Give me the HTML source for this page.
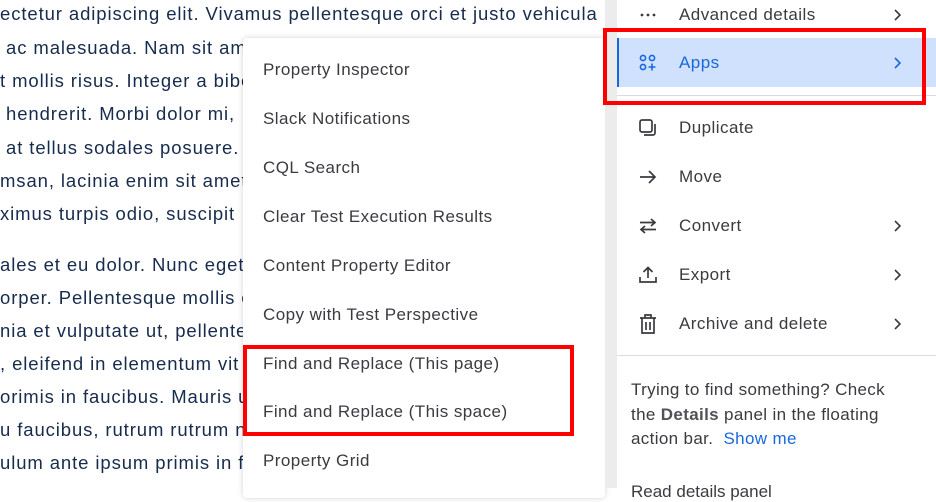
<!DOCTYPE html>
<html><head><meta charset="utf-8"><style>
*{margin:0;padding:0;box-sizing:border-box}
body{width:936px;height:488px;overflow:hidden;background:#fff;font-family:"Liberation Sans",sans-serif;position:relative;color:#292a2e}
.bg{position:absolute;left:0;top:0;font-size:18.5px;letter-spacing:0.9px;color:#172b4d;white-space:nowrap}
.bg div{position:absolute;left:0;height:33px;line-height:33px}
.mid{position:absolute;left:243px;top:38px;width:362px;height:460px;background:#fff;border-radius:4px;box-shadow:0 0 6px rgba(0,0,0,.18)}
.mid div{position:absolute;left:20px;font-size:17px;letter-spacing:0.45px;color:#3a3b40;line-height:20px;white-space:nowrap}
.strip{position:absolute;left:605px;top:0;width:12px;height:488px;background:#ececed}
.right{position:absolute;left:617px;top:0;width:319px;height:488px;background:#fff}
.it{position:absolute;left:0;width:319px;height:49px;font-size:17px;letter-spacing:0.45px;color:#3a3b40}
.it .t{position:absolute;left:62px;top:50%;transform:translateY(-50%)}
.it svg.ic{position:absolute;left:22px;top:50%;transform:translateY(-50%)}
.it .ch{position:absolute;left:276px;top:50%;transform:translateY(-50%)}
.sep{position:absolute;left:0;width:319px;height:1px;background:#dcdde0}
.red{position:absolute;border:4px solid #f00}
.note{position:absolute;left:14px;top:378px;font-size:17px;letter-spacing:0.35px;line-height:24.5px;color:#3a3b40;width:272px}
</style></head><body>
<div class="bg">
<div style="top:-3px">ectetur adipiscing elit. Vivamus pellentesque orci et justo vehicula</div>
<div style="top:31px">&nbsp;ac malesuada. Nam sit am</div>
<div style="top:64px">t mollis risus. Integer a bibe</div>
<div style="top:97px">&nbsp;hendrerit. Morbi dolor mi,</div>
<div style="top:131px">&nbsp;at tellus sodales posuere.</div>
<div style="top:164px">msan, lacinia enim sit amet,</div>
<div style="top:197px">ximus turpis odio, suscipit</div>
<div style="top:248px">ales et eu dolor. Nunc eget</div>
<div style="top:281px">orper. Pellentesque mollis e</div>
<div style="top:314px">nia et vulputate ut, pellente</div>
<div style="top:347px">, eleifend in elementum vit</div>
<div style="top:380px">orimis in faucibus. Mauris u</div>
<div style="top:413px">u faucibus, rutrum rutrum n</div>
<div style="top:446px">ulum ante ipsum primis in f</div>
<div style="top:248px;left:594px">n</div>
<div style="top:314px;left:594px">,</div>
</div>
<div class="mid">
<div style="top:22px">Property Inspector</div>
<div style="top:71px">Slack Notifications</div>
<div style="top:120px">CQL Search</div>
<div style="top:169px">Clear Test Execution Results</div>
<div style="top:218px">Content Property Editor</div>
<div style="top:267px">Copy with Test Perspective</div>
<div style="top:316px">Find and Replace (This page)</div>
<div style="top:364px">Find and Replace (This space)</div>
<div style="top:413px">Property Grid</div>
</div>
<div class="strip"></div>
<div class="right">
<div class="it" style="top:-10px"><svg class="ic" width="18" height="4" viewBox="0 0 18 4"><circle cx="3" cy="2" r="1.4" fill="#3a3b40"/><circle cx="9" cy="2" r="1.4" fill="#3a3b40"/><circle cx="15" cy="2" r="1.4" fill="#3a3b40"/></svg><span class="t">Advanced details</span><svg class="ch" width="8" height="12" viewBox="0 0 8 12"><path d="M2 1l5 5-5 5" fill="none" stroke="#3a3b40" stroke-width="1.6"/></svg></div>
<div class="it" style="top:38px;background:#cfe1fd;color:#1868db;border-left:2px solid #1868db"><svg class="ic" style="left:20px" width="18" height="18" viewBox="0 0 18 18" fill="none" stroke="#1868db" stroke-width="1.6"><circle cx="4" cy="4" r="2.6"/><circle cx="13" cy="4" r="2.6"/><circle cx="4" cy="13" r="2.6"/><path d="M13 9.5v7M9.5 13h7"/></svg><span class="t" style="left:60px">Apps</span><svg class="ch" style="left:274px" width="8" height="12" viewBox="0 0 8 12"><path d="M2 1l5 5-5 5" fill="none" stroke="#1868db" stroke-width="1.6"/></svg></div>
<div class="sep" style="top:95px"></div>
<div class="it" style="top:103px"><svg class="ic" width="18" height="18" viewBox="0 0 18 18" fill="none" stroke="#3a3b40" stroke-width="1.7"><rect x="1" y="1" width="12" height="12" rx="2"/><path d="M16 5v9a2 2 0 0 1-2 2H5"/></svg><span class="t">Duplicate</span></div>
<div class="it" style="top:152px"><svg class="ic" width="18" height="14" viewBox="0 0 18 14" fill="none" stroke="#3a3b40" stroke-width="1.7"><path d="M1 7h15M10 1l6 6-6 6"/></svg><span class="t">Move</span></div>
<div class="it" style="top:201px"><svg class="ic" width="18" height="16" viewBox="0 0 18 16" fill="none" stroke="#3a3b40" stroke-width="1.7"><path d="M1 4.5h15M12 1l4 3.5-4 3.5M17 11.5H2M6 8l-4 3.5L6 15"/></svg><span class="t">Convert</span><svg class="ch" width="8" height="12" viewBox="0 0 8 12"><path d="M2 1l5 5-5 5" fill="none" stroke="#3a3b40" stroke-width="1.6"/></svg></div>
<div class="it" style="top:250px"><svg class="ic" width="18" height="18" viewBox="0 0 18 18" fill="none" stroke="#3a3b40" stroke-width="1.7"><path d="M9 12V1.5M4.5 6L9 1.5 13.5 6M1 11v5h16v-5"/></svg><span class="t">Export</span><svg class="ch" width="8" height="12" viewBox="0 0 8 12"><path d="M2 1l5 5-5 5" fill="none" stroke="#3a3b40" stroke-width="1.6"/></svg></div>
<div class="it" style="top:299px"><svg class="ic" width="18" height="20" viewBox="0 0 18 20" fill="none" stroke="#3a3b40" stroke-width="1.7"><path d="M1 4h16M6 4V1h6v3M3 4v15h12V4M7 8v8M11 8v8"/></svg><span class="t">Archive and delete</span><svg class="ch" width="8" height="12" viewBox="0 0 8 12"><path d="M2 1l5 5-5 5" fill="none" stroke="#3a3b40" stroke-width="1.6"/></svg></div>
<div class="sep" style="top:355px"></div>
<div class="note">Trying to find something? Check the <b style="font-weight:bold;color:#505258">Details</b> panel in the floating action bar. &nbsp;<span style="color:#1868db">Show me</span></div>
<div style="position:absolute;left:14px;top:482px;font-size:17px;color:#3a3b40">Read details panel</div>
</div>
<div class="red" style="left:603px;top:28px;width:323px;height:77px"></div>
<div class="red" style="left:243px;top:345px;width:331px;height:91px"></div>
</body></html>
